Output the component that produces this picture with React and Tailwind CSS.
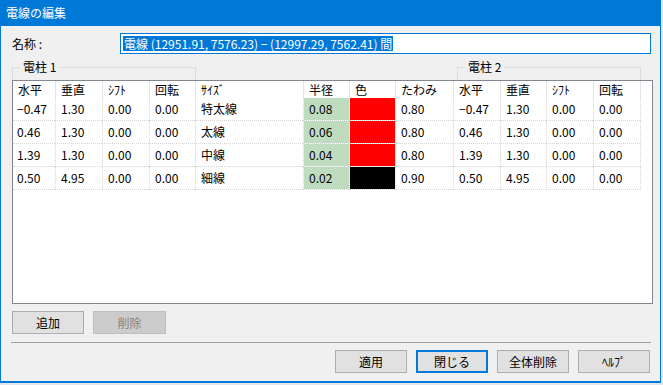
import React from 'react';

// --- column layout of the list view ---
const COLUMNS = [
  { label: '水平', w: 'w-[42px]', first: true },
  { label: '垂直', w: 'w-[47px]' },
  { label: 'ｼﾌﾄ', w: 'w-[47px]' },
  { label: '回転', w: 'w-[46px]' },
  { label: 'ｻｲｽﾞ', w: 'w-[108px]' },
  { label: '半径', w: 'w-[46px]' },
  { label: '色', w: 'w-[46px]' },
  { label: 'たわみ', w: 'w-[58px]' },
  { label: '水平', w: 'w-[47px]' },
  { label: '垂直', w: 'w-[46px]' },
  { label: 'ｼﾌﾄ', w: 'w-[47px]' },
  { label: '回転', w: 'w-[47px]' },
];

const WIRES = [
  { h1: '−0.47', v1: '1.30', s1: '0.00', r1: '0.00', size: '特太線', radius: '0.08', color: 'bg-[#ff0000]', sag: '0.80', h2: '−0.47', v2: '1.30', s2: '0.00', r2: '0.00' },
  { h1: '0.46', v1: '1.30', s1: '0.00', r1: '0.00', size: '太線', radius: '0.06', color: 'bg-[#ff0000]', sag: '0.80', h2: '0.46', v2: '1.30', s2: '0.00', r2: '0.00' },
  { h1: '1.39', v1: '1.30', s1: '0.00', r1: '0.00', size: '中線', radius: '0.04', color: 'bg-[#ff0000]', sag: '0.80', h2: '1.39', v2: '1.30', s2: '0.00', r2: '0.00' },
  { h1: '0.50', v1: '4.95', s1: '0.00', r1: '0.00', size: '細線', radius: '0.02', color: 'bg-[#000000]', sag: '0.90', h2: '0.50', v2: '4.95', s2: '0.00', r2: '0.00' },
];

const FONT = { fontFamily: '"Liberation Sans Narrow", "Noto Sans CJK JP", sans-serif' };

const Button = ({ children, disabled, focused, className = '' }) => (
  <button
    className={`h-[23px] w-[72px] text-[12px] leading-none flex items-center justify-center ${
      disabled
        ? 'bg-[#cccccc] border border-[#bfbfbf] text-[#838383]'
        : focused
        ? 'bg-[#e1e1e1] border-2 border-[#0078d7] text-black'
        : 'bg-[#e1e1e1] border border-[#adadad] text-black'
    } ${className}`}
  >
    {children}
  </button>
);

const GroupBox = ({ label, className = '' }) => (
  <div className={`relative h-[13px] w-[184px] border-t border-x border-[#dcdcdc] ${className}`}>
    <span className="absolute -top-[10px] left-[7px] bg-[#f0f0f0] px-[3px] text-[12px] leading-[18px] text-black">
      {label}
    </span>
  </div>
);

const Row = ({ wire }) => {
  const cells = [wire.h1, wire.v1, wire.s1, wire.r1, wire.size, wire.radius, null, wire.sag, wire.h2, wire.v2, wire.s2, wire.r2];
  return (
    <div className="flex">
      {cells.map((text, i) => (
        <div
          key={i}
          className={`${COLUMNS[i].w} h-[23px] border-b border-dotted border-[#d4d4d4] bg-clip-padding flex items-center text-[12px] text-black ${
            COLUMNS[i].first ? 'pl-[4px]' : 'border-l pl-[5px]'
          } ${i === 5 ? 'bg-[#c0dcc0]' : ''} ${i === 6 ? wire.color : ''}`}
        >
          {text}
        </div>
      ))}
      <div className="w-[11px] h-[23px] border-l border-dotted border-[#d4d4d4]" />
    </div>
  );
};

export default function App() {
  return (
    <div className="w-[663px] h-[385px] bg-[#dfe5ec] overflow-hidden" style={FONT}>
      <div className="w-[661px] h-[383px] bg-[#f0f0f0] border-x border-b-2 border-[#0078d7] flex flex-col">
        {/* title bar */}
        <div className="h-[26px] bg-[#0078d7] flex items-center pl-[5px] text-white text-[12px] shrink-0">
          電線の編集
        </div>

        <div className="flex flex-col pl-[11px]">
          {/* name */}
          <div className="flex items-center mt-[7px] h-[21px]">
            <span className="w-[108px] text-[12px] text-black">名称 :</span>
            <div className="w-[531px] h-[21px] bg-white border border-[#0078d7] flex items-center pl-[2px]">
              <span className="bg-[#0078d7] text-white text-[12px] leading-[15px] px-[1px]">
                電線 (12951.91, 7576.23) − (12997.29, 7562.41) 間
              </span>
            </div>
          </div>

          {/* group boxes */}
          <div className="flex mt-[13px]">
            <GroupBox label="電柱 1" />
            <GroupBox label="電柱 2" className="ml-[261px]" />
          </div>

          {/* list view */}
          <div className="w-[641px] h-[224px] bg-white border border-[#828790] flex flex-col">
            <div className="flex h-[17px]">
              {COLUMNS.map((c, i) => (
                <div
                  key={i}
                  className={`${c.w} h-[17px] flex items-center text-[12px] text-black ${
                    c.first ? 'pl-[5px]' : 'border-l border-[#e5e5e5] pl-[5px]'
                  }`}
                >
                  {c.label}
                </div>
              ))}
              <div className="w-[11px] border-l border-[#e5e5e5]" />
            </div>
            {WIRES.map((w, i) => (
              <Row key={i} wire={w} />
            ))}
          </div>

          {/* add / delete */}
          <div className="flex gap-[9px] mt-[7px]">
            <Button>追加</Button>
            <Button disabled className="w-[73px]">削除</Button>
          </div>

          {/* separator */}
          <div className="w-[640px] -ml-[1px] mt-[8px] border-t border-[#a0a0a0]" />

          {/* dialog buttons */}
          <div className="flex gap-[9px] mt-[7px] pl-[323px]">
            <Button>適用</Button>
            <Button focused>閉じる</Button>
            <Button>全体削除</Button>
            <Button>ﾍﾙﾌﾟ</Button>
          </div>
        </div>
      </div>
    </div>
  );
}
